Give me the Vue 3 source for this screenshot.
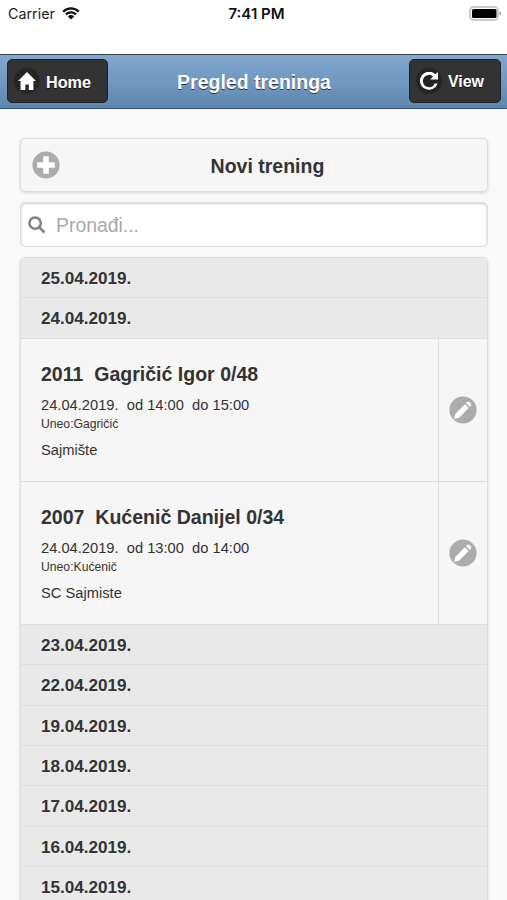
<script setup>
const entries = [
  { date: '25.04.2019.' },
  { date: '24.04.2019.' },
  {
    title: '2011  Gagričić Igor 0/48',
    time: '24.04.2019.  od 14:00  do 15:00',
    author: 'Uneo:Gagričić',
    place: 'Sajmište'
  },
  {
    title: '2007  Kućenič Danijel 0/34',
    time: '24.04.2019.  od 13:00  do 14:00',
    author: 'Uneo:Kućenič',
    place: 'SC Sajmiste'
  },
  { date: '23.04.2019.' },
  { date: '22.04.2019.' },
  { date: '19.04.2019.' },
  { date: '18.04.2019.' },
  { date: '17.04.2019.' },
  { date: '16.04.2019.' },
  { date: '15.04.2019.' }
]
</script>

<template>
  <div class="screen">
    <div class="status">
      <div class="carrier">
        <span>Carrier</span>
        <svg class="wifi" viewBox="0 0 18 13">
          <path d="M1.2 4.7a11 11 0 0 1 15.6 0M3.9 7.5a7.2 7.2 0 0 1 10.2 0" />
          <path class="dot" d="M5.8 9.4a4.5 4.5 0 0 1 6.4 0L9 12.6z" />
        </svg>
      </div>
      <span class="clock">7:41 PM</span>
      <div class="power">
        <svg class="battery" viewBox="0 0 33 15">
          <rect class="shell" x="1" y="1" width="28" height="13" rx="3.6" />
          <rect x="3" y="3" width="24.5" height="9" rx="1.6" />
          <path class="tip" d="M30.4 5.3q1.7.5 1.7 2.2t-1.7 2.2z" />
        </svg>
      </div>
    </div>

    <header class="bar">
      <button class="nav home">
        <span class="disc">
          <svg viewBox="0 0 14 14"><path d="M7 0 0 7h2v7h3.7V9.8h2.7V14H12V7h2z" /></svg>
        </span>
        <span>Home</span>
      </button>
      <h1>Pregled treninga</h1>
      <button class="nav view">
        <span class="disc">
          <svg viewBox="0 0 14 14"><path d="M11.5 8.9A4.82 4.82 0 1 1 10.2 3.4L8 5.9H14V0l-2.1 1.8A7 7 0 1 0 13.7 8.9z" /></svg>
        </span>
        <span>View</span>
      </button>
    </header>

    <main>
      <button class="add">
        <svg class="plus" viewBox="0 0 28 28">
          <circle cx="14" cy="14" r="13.6" />
          <path d="M11.2 5.2h5.6v6h6v5.6h-6v6h-5.6v-6h-6v-5.6h6z" />
        </svg>
        <span>Novi trening</span>
      </button>

      <label class="search">
        <svg viewBox="0 0 18 18"><circle cx="7.1" cy="7.1" r="5.7" /><path d="m11.3 11.3 5.2 5.2" /></svg>
        <input type="text" placeholder="Pronađi..." />
      </label>

      <ul class="list">
        <li v-for="(entry, i) in entries" :key="i" :class="entry.date ? 'divider' : 'item'">
          <template v-if="entry.date">{{ entry.date }}</template>
          <template v-else>
            <div class="info">
              <h2>{{ entry.title }}</h2>
              <p class="time">{{ entry.time }}</p>
              <p class="author">{{ entry.author }}</p>
              <p class="place">{{ entry.place }}</p>
            </div>
            <div class="edit">
              <svg viewBox="0 0 28 28">
                <circle cx="14" cy="14" r="13.6" />
                <path d="m5 22.9 1.2-5L15.9 8.2l3.8 3.8-9.7 9.7zM17 7.1l1.3-1.2q1.1-.8 2.1.1l1.5 1.5q.9 1 .1 2.1l-1.2 1.3z" />
              </svg>
            </div>
          </template>
        </li>
      </ul>
    </main>
  </div>
</template>

<style>
body {
  margin: 0;
  background: #f9f9f9;
}
</style>

<style scoped>
* {
  box-sizing: border-box;
}
.screen {
  height: 900px;
  overflow: hidden;
  background: #f9f9f9;
  color: #333;
  font-family: "Liberation Sans", Arial, sans-serif;
}
svg {
  display: block;
  flex: none;
}
button {
  font: inherit;
  color: inherit;
  margin: 0;
}
.status {
  height: 54px;
  padding: 5px 5px 0 8px;
  background: #fff;
  display: grid;
  grid-template-columns: 1fr auto 1fr;
  align-items: start;
  font-family: Inter, sans-serif;
  font-size: 14.3px;
  line-height: 18px;
  color: #222;
}
.carrier {
  display: flex;
  gap: 7px;
}
.wifi {
  width: 18px;
  height: 13px;
  margin-top: 2px;
  fill: none;
  stroke: #111;
  stroke-width: 2.3;
}
.wifi .dot {
  fill: #111;
  stroke: none;
}
.clock {
  padding-left: 3px;
  font-weight: 600;
  font-size: 15px;
  color: #111;
}
.power {
  display: flex;
  justify-content: flex-end;
}
.battery {
  width: 33px;
  height: 15px;
  margin-top: 1px;
}
.battery .shell {
  fill: #fff;
  stroke: #b8b8b8;
  stroke-width: 1.4;
}
.battery .tip {
  fill: #aaa;
}
.bar {
  height: 55px;
  padding: 4px 6px 0 7px;
  border-top: 1px solid #3b444c;
  border-bottom: 1px solid #3b5268;
  background: linear-gradient(#81a8cf, #5e87b0);
  display: grid;
  grid-template-columns: 101px 1fr 92px;
  align-items: start;
  color: #fff;
}
.bar h1 {
  margin: 0;
  padding: 11px 9px 0 0;
  text-align: center;
  font-size: 19.5px;
  line-height: 24px;
  text-shadow: 0 1.35px 0 #333;
}
.nav {
  height: 44px;
  padding: 0 0 0 6px;
  border: 1px solid #222;
  border-radius: 5px;
  background: #333;
  color: #fff;
  display: flex;
  align-items: center;
  gap: 6px;
  font-size: 16.2px;
  font-weight: 700;
  text-shadow: 0 1px 0 #111;
}
.nav span:last-child {
  padding-top: 2px;
}
.view {
  font-size: 15.9px;
}
.disc {
  width: 26px;
  height: 26px;
  border-radius: 50%;
  background: #252525;
  display: grid;
  place-items: center;
}
.disc svg {
  width: 18px;
  height: 18px;
  fill: #fff;
}
main {
  padding: 29px 19px 0 20px;
}
.add {
  width: 100%;
  height: 54px;
  padding: 0 12px 0 11px;
  border: 1.35px solid #ddd;
  border-radius: 5px;
  background: #f6f6f6;
  box-shadow: 0 1px 3px rgba(0, 0, 0, 0.15);
  display: grid;
  grid-template-columns: 28px 1fr;
  align-items: center;
  font-size: 19.5px;
  font-weight: 700;
  text-shadow: 0 1px 0 #f3f3f3;
}
.add span {
  padding-top: 2px;
}
.plus {
  width: 28px;
  height: 28px;
}
.plus circle,
.edit circle {
  fill: #acacac;
}
.plus path,
.edit path {
  fill: #fff;
}
.search {
  height: 45px;
  margin: 10px 0;
  padding-left: 7px;
  border: 1.35px solid #ddd;
  border-radius: 5px;
  background: #fff;
  box-shadow: inset 0 1px 3px rgba(0, 0, 0, 0.2);
  display: flex;
  align-items: center;
  gap: 8px;
}
.search svg {
  width: 18px;
  height: 18px;
  fill: none;
  stroke: #808080;
  stroke-width: 2.5;
}
.search input {
  flex: 1;
  min-width: 0;
  padding: 2px 2px 0;
  border: 0;
  outline: 0;
  background: transparent;
  font: 19.4px "Liberation Sans", Arial, sans-serif;
}
.search input::placeholder {
  color: #aaa;
}
.list {
  margin: 0;
  padding: 0;
  list-style: none;
  border: 1px solid #ddd;
  border-bottom: 0;
  border-radius: 5px 5px 0 0;
  overflow: hidden;
  box-shadow: 0 1px 3px rgba(0, 0, 0, 0.15);
}
.divider {
  height: 40.35px;
  padding-left: 20px;
  border-bottom: 1px solid #dedede;
  background: #e9e9e9;
  font-size: 17.1px;
  font-weight: 700;
  line-height: 42px;
  text-shadow: 0 1px 0 #eee;
}
.item {
  height: 143.1px;
  border-bottom: 1px solid #ddd;
  background: #f6f6f6;
  display: flex;
}
.info {
  flex: 1;
  padding: 23px 0 0 20px;
  white-space: pre;
}
.info h2 {
  margin: 0;
  font-size: 19.55px;
  line-height: 24px;
}
.info p {
  margin: 0;
  font-size: 14.7px;
  line-height: 18px;
}
.info .time {
  margin-top: 10px;
}
.info .author {
  margin-top: 2px;
  font-size: 12.2px;
  line-height: 16px;
}
.info .place {
  margin-top: 9px;
}
.edit {
  width: 49px;
  border-left: 1px solid #ddd;
  display: grid;
  place-items: center;
}
.edit svg {
  width: 28px;
  height: 28px;
}
</style>
